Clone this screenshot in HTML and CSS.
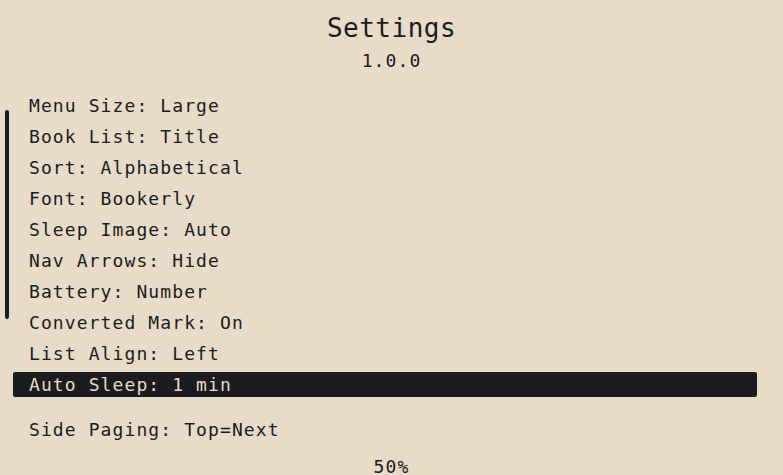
FILE: index.html
```html
<!DOCTYPE html>
<html lang="en">
<head>
<meta charset="utf-8">
<title>Settings</title>
<link rel="stylesheet" href="styles.css">
</head>
<body>
<main class="screen">
  <header class="head">
    <h1 class="title">Settings</h1>
    <div class="version">1.0.0</div>
  </header>
  <section class="menu">
    <div class="scrollbar"></div>
    <ul class="items">
      <li class="item">Menu Size: Large</li>
      <li class="item">Book List: Title</li>
      <li class="item">Sort: Alphabetical</li>
      <li class="item">Font: Bookerly</li>
      <li class="item">Sleep Image: Auto</li>
      <li class="item">Nav Arrows: Hide</li>
      <li class="item">Battery: Number</li>
      <li class="item">Converted Mark: On</li>
      <li class="item">List Align: Left</li>
      <li class="item selected">Auto Sleep: 1 min</li>
      <li class="item group">Side Paging: Top=Next</li>
    </ul>
  </section>
  <footer class="progress">50%</footer>
</main>
</body>
</html>
```
FILE: styles.css
```css
html, body {
  margin: 0;
  padding: 0;
  background: #e8dbc7;
}

.screen {
  width: 783px;
  height: 475px;
  overflow: hidden;
  color: #1a1c1f;
  font-family: "DejaVu Sans Mono", "Liberation Mono", monospace;
  font-size: 18px;
  letter-spacing: 1.1px;
}

.head {
  padding-top: 13px;
  text-align: center;
}

.title {
  margin: 0;
  font-size: 26px;
  font-weight: normal;
  line-height: 30px;
  letter-spacing: 0.5px;
}

.version {
  margin-top: 6px;
  line-height: 24px;
}

.menu {
  display: flex;
  align-items: flex-start;
  gap: 4px;
  margin-top: 20px;
  padding-left: 5px;
}

.scrollbar {
  flex: none;
  width: 4px;
  height: 209px;
  margin-top: 17px;
  border-radius: 2px;
  background: #1a1c1f;
}

.items {
  list-style: none;
  margin: 0;
  padding: 0;
  width: 744px;
  display: flex;
  flex-direction: column;
  gap: 6px;
}

.item {
  padding: 1px 0 0 16px;
  line-height: 24px;
  white-space: nowrap;
  border-radius: 2px;
}

.item.selected {
  background: #1a1c1f;
  color: #e8dbc7;
}

.item.group {
  margin-top: 14px;
}

.progress {
  margin-top: 13px;
  text-align: center;
  line-height: 24px;
}
```
